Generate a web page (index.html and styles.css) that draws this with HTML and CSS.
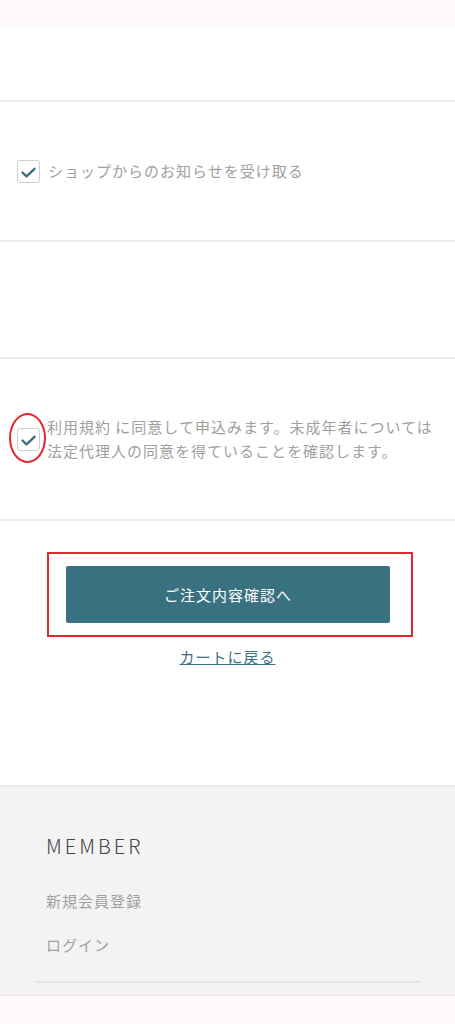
FILE: index.html
```html
<!DOCTYPE html>
<html lang="ja">
<head>
    <meta charset="UTF-8">
    <meta name="viewport" content="width=device-width, initial-scale=1.0">
    <title>ご注文手続き</title>
    <link rel="stylesheet" href="styles.css">
</head>
<body>
    <div class="top-band"></div>

    <div class="section blank-top"></div>

    <div class="section option-row">
        <label class="check-item">
            <span class="checkbox">
                <svg viewBox="0 0 23 23" width="23" height="23"><path d="M5.5 12.5 L9.5 16.3 L17.5 8.8" fill="none" stroke="#3a6f80" stroke-width="2.4" stroke-linecap="round" stroke-linejoin="round"/></svg>
            </span>
            <span class="check-text">ショップからのお知らせを受け取る</span>
        </label>
    </div>

    <div class="section blank-mid"></div>

    <div class="section agree-row">
        <label class="check-item agree">
            <span class="checkbox">
                <svg viewBox="0 0 23 23" width="23" height="23"><path d="M5.5 12.5 L9.5 16.3 L17.5 8.8" fill="none" stroke="#3a6f80" stroke-width="2.4" stroke-linecap="round" stroke-linejoin="round"/></svg>
                <span class="mark-circle"></span>
            </span>
            <span class="check-text">利用規約 に同意して申込みます。未成年者については法定代理人の同意を得ていることを確認します。</span>
        </label>
    </div>

    <div class="actions">
        <div class="mark-box">
            <button class="confirm-btn">ご注文内容確認へ</button>
        </div>
        <a class="back-link" href="#">カートに戻る</a>
    </div>

    <div class="footer">
        <h2 class="footer-title">MEMBER</h2>
        <ul class="footer-links">
            <li><a href="#">新規会員登録</a></li>
            <li><a href="#">ログイン</a></li>
        </ul>
        <div class="footer-rule"></div>
    </div>

    <div class="bottom-band"></div>
</body>
</html>
```

FILE: styles.css
```css
body {
    font-family: "Noto Sans CJK JP", "Noto Sans", sans-serif;
    margin: 0;
    padding: 0;
    background-color: #fff;
    color: #999;
}

.top-band {
    height: 29px;
    background-color: #fdf9fd;
}

.section {
    border-bottom: 2px solid #ececec;
}

.blank-top {
    height: 71px;
}

.blank-mid {
    height: 115px;
}

.option-row {
    height: 138px;
    display: flex;
    align-items: center;
    padding: 0 17px;
}

.agree-row {
    height: 160px;
    display: flex;
    align-items: center;
    padding: 0 15px 0 17px;
}

.check-item {
    display: flex;
    align-items: center;
    gap: 8px;
    cursor: pointer;
}

.check-item.agree {
    gap: 7px;
}

.checkbox {
    position: relative;
    flex-shrink: 0;
    width: 23px;
    height: 23px;
    box-sizing: border-box;
    border: 1px solid #cfcfcf;
    border-radius: 3px;
    background-color: #fff;
}

.checkbox svg {
    position: absolute;
    left: -1px;
    top: -1px;
}

.check-text {
    font-size: 15px;
    line-height: 24px;
    letter-spacing: 1px;
    color: #a0a0a0;
}

.mark-circle {
    position: absolute;
    left: -9px;
    top: -16px;
    width: 37px;
    height: 50px;
    box-sizing: border-box;
    border: 2px solid #e4262c;
    border-radius: 50%;
}

.actions {
    height: 264px;
    box-sizing: border-box;
    padding-top: 31px;
}

.mark-box {
    width: 366px;
    box-sizing: border-box;
    margin-left: 47px;
    padding: 12px 21px 12px 17px;
    border: 2px solid #e4262c;
}

.confirm-btn {
    display: block;
    width: 100%;
    height: 57px;
    border: none;
    border-radius: 2px;
    background-color: #3a7181;
    color: #fff;
    font-family: inherit;
    font-size: 15px;
    letter-spacing: 1px;
    cursor: pointer;
}

.back-link {
    display: block;
    width: fit-content;
    margin: 8px auto 0;
    font-size: 15px;
    line-height: 24px;
    letter-spacing: 1px;
    color: #3a7181;
    text-decoration: underline;
}

.footer {
    background-color: #f3f3f3;
    border-top: 2px solid #e8e8e8;
    padding-top: 43px;
}

.footer-title {
    margin: 0 46px;
    font-family: "Noto Sans CJK JP", "Noto Sans", sans-serif;
    font-weight: 300;
    font-size: 20px;
    line-height: 32px;
    letter-spacing: 3px;
    color: #444;
}

.footer-links {
    list-style-type: none;
    margin: 17px 0 0;
    padding: 0 46px;
}

.footer-links li {
    line-height: 44px;
    font-size: 15px;
    letter-spacing: 1px;
}

.footer-links a {
    color: #a0a0a0;
    text-decoration: none;
}

.footer-rule {
    margin: 14px 35px 0;
    border-top: 2px solid #e3e6e6;
    padding-bottom: 12px;
}

.bottom-band {
    height: 28px;
    background-color: #fdf9fc;
    border-top: 1px solid #f2e6dc;
}
```
